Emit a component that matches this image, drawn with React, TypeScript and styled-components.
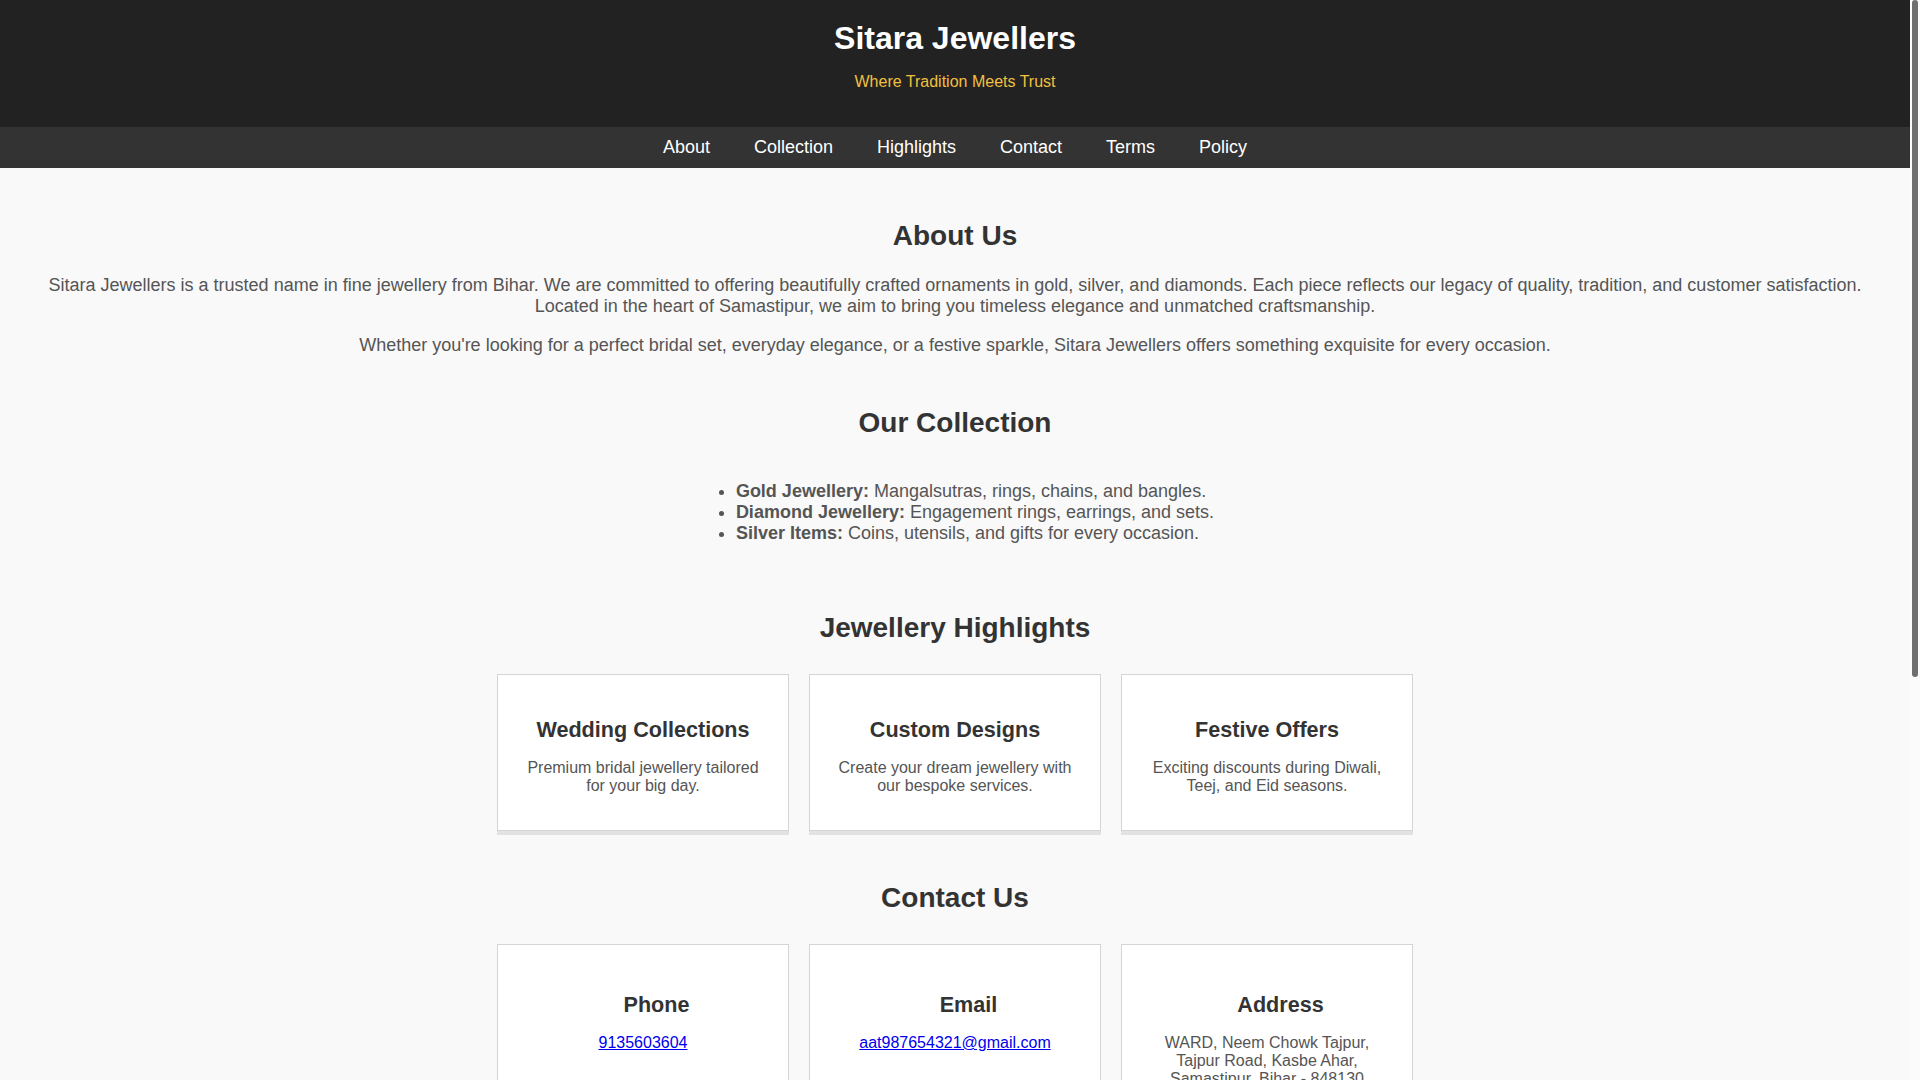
import React from "react";
import styled, { createGlobalStyle } from "styled-components";

const GlobalStyle = createGlobalStyle`
  html, body {
    margin: 0;
    padding: 0;
  }
  html {
    scrollbar-width: none;
  }
  body {
    background: #f9f9f9;
    font-family: "Liberation Sans", Arial, sans-serif;
    color: #333;
  }
`;

const Page = styled.div`
  margin-right: 10px;
`;

const ScrollTrack = styled.div`
  position: fixed;
  top: 0;
  right: 0;
  width: 10px;
  height: 100vh;
  background: #fbfbfb;
  z-index: 10;
`;

const ScrollThumb = styled.div`
  width: 6px;
  margin: 0 2px;
  border-radius: 3px;
  background: #6f6f6f;
`;

const Header = styled.header`
  background: #222;
  color: #fff;
  text-align: center;
  padding: 20px;
`;

const Brand = styled.h1`
  margin: 0;
  font-size: 32px;
  font-weight: bold;
  color: #fff;
`;

const Tagline = styled.p`
  margin: 16px 0;
  font-size: 16px;
  color: #f0c040;
`;

const Nav = styled.nav`
  background: #333;
  padding: 10px;
  display: flex;
  justify-content: center;
  gap: 44px;
`;

const NavLink = styled.a`
  color: #fff;
  text-decoration: none;
  font-size: 18px;
`;

const Main = styled.main`
  display: flex;
  flex-direction: column;
  gap: 51px;
  padding: 52px 0 60px;
`;

const Section = styled.section`
  display: flex;
  flex-direction: column;
  align-items: center;
  text-align: center;
  padding: 0 40px;
`;

const SectionTitle = styled.h2`
  margin: 0 0 23px;
  font-size: 28px;
  line-height: 32px;
  font-weight: bold;
  color: #333;
`;

const Para = styled.p<{ $last?: boolean }>`
  margin: 0 0 ${(p) => (p.$last ? "0" : "18px")};
  font-size: 18px;
  color: #555;
`;

const List = styled.ul`
  margin: 19px 0 17px;
  padding-left: 40px;
  text-align: left;
  font-size: 18px;
  color: #555;
`;

const Label = styled.strong`
  color: #555;
`;

const CardRow = styled.div`
  display: flex;
  justify-content: center;
  gap: 20px;
  margin-top: 7px;
`;

const Card = styled.div`
  width: 250px;
  padding: 20px;
  background: #fff;
  border: 1px solid #d4d4d4;
  box-shadow: 0 4px 0 #e2e2e2;
  text-align: center;
`;

const CardTitle = styled.h3<{ $icon?: boolean }>`
  margin: ${(p) => (p.$icon ? "27px 0 16px" : "22px 0 16px")};
  padding-left: ${(p) => (p.$icon ? "27px" : "0")};
  font-size: 21.6px;
  font-weight: bold;
  color: #333;
`;

const CardText = styled.p`
  margin: 0 0 15px;
  font-size: 16px;
  color: #555;
`;

const CardLink = styled.a`
  color: #0000ee;
  text-decoration: underline;
  font-size: 16px;
`;

const Footer = styled.footer`
  background: #222;
  color: #ccc;
  text-align: center;
  padding: 24px 20px;
  font-size: 16px;
`;

const highlights = [
  { title: "Wedding Collections", text: "Premium bridal jewellery tailored for your big day." },
  { title: "Custom Designs", text: "Create your dream jewellery with our bespoke services." },
  { title: "Festive Offers", text: "Exciting discounts during Diwali, Teej, and Eid seasons." },
];

export default function App() {
  return (
    <>
      <GlobalStyle />
      <ScrollTrack aria-hidden="true">
        <ScrollThumb style={{ height: 677 }} />
      </ScrollTrack>
      <Page>
        <Header>
          <Brand>Sitara Jewellers</Brand>
          <Tagline>Where Tradition Meets Trust</Tagline>
        </Header>
        <Nav>
          <NavLink href="#about">About</NavLink>
          <NavLink href="#collection">Collection</NavLink>
          <NavLink href="#highlights">Highlights</NavLink>
          <NavLink href="#contact">Contact</NavLink>
          <NavLink href="#terms">Terms</NavLink>
          <NavLink href="#policy">Policy</NavLink>
        </Nav>
        <Main>
          <Section id="about">
            <SectionTitle>About Us</SectionTitle>
            <Para>
              Sitara Jewellers is a trusted name in fine jewellery from Bihar. We are committed to offering beautifully
              crafted ornaments in gold, silver, and diamonds. Each piece reflects our legacy of quality, tradition, and
              customer satisfaction. Located in the heart of Samastipur, we aim to bring you timeless elegance and
              unmatched craftsmanship.
            </Para>
            <Para $last>
              Whether you're looking for a perfect bridal set, everyday elegance, or a festive sparkle, Sitara Jewellers
              offers something exquisite for every occasion.
            </Para>
          </Section>

          <Section id="collection">
            <SectionTitle>Our Collection</SectionTitle>
            <List>
              <li>
                <Label>Gold Jewellery:</Label> Mangalsutras, rings, chains, and bangles.
              </li>
              <li>
                <Label>Diamond Jewellery:</Label> Engagement rings, earrings, and sets.
              </li>
              <li>
                <Label>Silver Items:</Label> Coins, utensils, and gifts for every occasion.
              </li>
            </List>
          </Section>

          <Section id="highlights">
            <SectionTitle>Jewellery Highlights</SectionTitle>
            <CardRow>
              {highlights.map((h) => (
                <Card key={h.title}>
                  <CardTitle>{h.title}</CardTitle>
                  <CardText>{h.text}</CardText>
                </Card>
              ))}
            </CardRow>
          </Section>

          <Section id="contact">
            <SectionTitle>Contact Us</SectionTitle>
            <CardRow>
              <Card>
                <CardTitle $icon>Phone</CardTitle>
                <CardText>
                  <CardLink href="tel:9135603604">9135603604</CardLink>
                </CardText>
              </Card>
              <Card>
                <CardTitle $icon>Email</CardTitle>
                <CardText>
                  <CardLink href="mailto:aat987654321@gmail.com">aat987654321@gmail.com</CardLink>
                </CardText>
              </Card>
              <Card>
                <CardTitle $icon>Address</CardTitle>
                <CardText>WARD, Neem Chowk Tajpur, Tajpur Road, Kasbe Ahar, Samastipur, Bihar - 848130</CardText>
              </Card>
            </CardRow>
          </Section>

          <Section id="terms">
            <SectionTitle>Terms &amp; Conditions</SectionTitle>
            <List>
              <li>All jewellery is hallmarked and certified for purity.</li>
              <li>Prices are subject to change based on daily gold and silver rates.</li>
              <li>Custom orders require an advance payment.</li>
              <li>Exchange is available on eligible items with a valid bill.</li>
              <li>Offers cannot be combined with other promotions.</li>
            </List>
          </Section>

          <Section id="policy">
            <SectionTitle>Our Policy</SectionTitle>
            <List>
              <li>We value your privacy and never share customer information.</li>
              <li>Returns are accepted within 7 days for unused items.</li>
              <li>Repairs and polishing services are offered at nominal charges.</li>
              <li>Lifetime buy-back is available on gold jewellery.</li>
              <li>Please retain your invoice for all future services.</li>
            </List>
          </Section>
        </Main>
        <Footer>© 2025 Sitara Jewellers. All rights reserved.</Footer>
      </Page>
    </>
  );
}
